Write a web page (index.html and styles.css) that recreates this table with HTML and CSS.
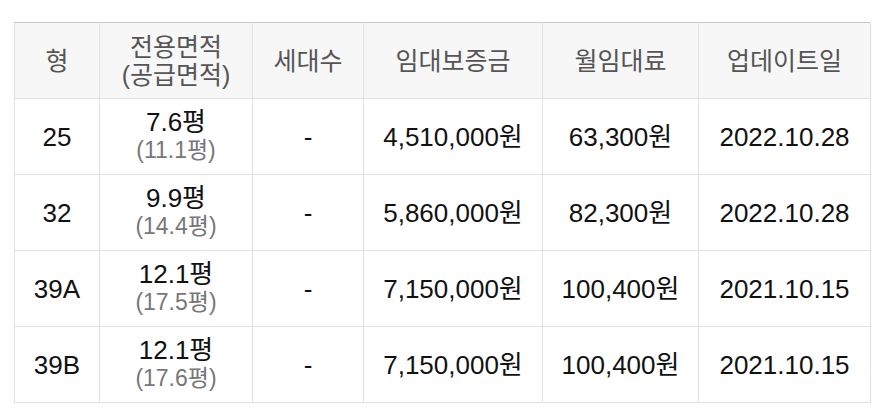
FILE: index.html
```html
<!DOCTYPE html>
<html lang="ko">
<head>
<meta charset="utf-8">
<link rel="stylesheet" href="styles.css">
</head>
<body>
<table class="units">
  <colgroup>
    <col class="c1"><col class="c2"><col class="c3"><col class="c4"><col class="c5"><col class="c6">
  </colgroup>
  <thead>
    <tr>
      <th>형</th>
      <th>전용면적<br>(공급면적)</th>
      <th>세대수</th>
      <th>임대보증금</th>
      <th>월임대료</th>
      <th>업데이트일</th>
    </tr>
  </thead>
  <tbody>
    <tr>
      <td>25</td>
      <td><div>7.6평</div><div class="sub">(11.1평)</div></td>
      <td>-</td>
      <td>4,510,000원</td>
      <td>63,300원</td>
      <td>2022.10.28</td>
    </tr>
    <tr>
      <td>32</td>
      <td><div>9.9평</div><div class="sub">(14.4평)</div></td>
      <td>-</td>
      <td>5,860,000원</td>
      <td>82,300원</td>
      <td>2022.10.28</td>
    </tr>
    <tr>
      <td>39A</td>
      <td><div>12.1평</div><div class="sub">(17.5평)</div></td>
      <td>-</td>
      <td>7,150,000원</td>
      <td>100,400원</td>
      <td>2021.10.15</td>
    </tr>
    <tr>
      <td>39B</td>
      <td><div>12.1평</div><div class="sub">(17.6평)</div></td>
      <td>-</td>
      <td>7,150,000원</td>
      <td>100,400원</td>
      <td>2021.10.15</td>
    </tr>
  </tbody>
</table>
</body>
</html>
```
FILE: styles.css
```css
html, body {
  margin: 0;
  background: #ffffff;
}
body {
  padding: 22px 0 0 14px;
  font-family: "Liberation Sans", "Noto Sans CJK KR", sans-serif;
}
.units {
  border-collapse: collapse;
  table-layout: fixed;
  width: 856px;
  border-top: 1px solid #c9c9c9;
  box-shadow: 0 1px 2px rgba(0,0,0,0.04);
}
.c1 { width: 85px; }
.c2 { width: 153px; }
.c3 { width: 111px; }
.c4 { width: 179px; }
.c5 { width: 156px; }
.c6 { width: 172px; }
.units th,
.units td {
  border: 1px solid #e2e2e2;
  text-align: center;
  vertical-align: middle;
  height: 75px;
  padding: 0;
  line-height: 28px;
}
.units th {
  background: #f7f7f7;
  color: #555555;
  font-weight: normal;
  font-size: 25px;
  border-top: 1px solid #c9c9c9;
}
.units td {
  color: #111111;
  font-size: 26px;
}
.units td .sub {
  color: #777777;
  font-size: 23px;
  line-height: 29px;
}
```
